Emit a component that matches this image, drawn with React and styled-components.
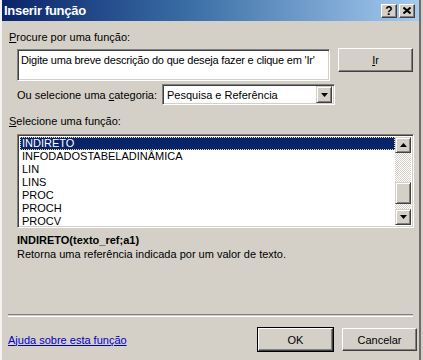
import React from 'react';
import styled, { createGlobalStyle } from 'styled-components';

const Global = createGlobalStyle`
  html, body {
    margin: 0;
    padding: 0;
    background: #d4d0c8;
  }
  body {
    font-family: "Liberation Sans", Arial, sans-serif;
    font-size: 11px;
    color: #000;
  }
`;

// Outer window frame
const Window = styled.div`
  width: 423px;
  height: 360px;
  box-sizing: border-box;
  display: flex;
  flex-direction: column;
  background: #d4d0c8;
  border-left: 2px solid #f4f3ef;
  border-right: 2px solid #d4d0c8;
  box-shadow: inset -2px 0 0 #6f6d69;
`;

const TitleBar = styled.div`
  height: 21px;
  flex: none;
  display: flex;
  align-items: center;
  padding: 0 4px 0 2px;
  margin-right: 2px;
  background: linear-gradient(90deg, #0a246a 0%, #3a6ea5 45%, #a6caf0 100%);
`;

const Title = styled.div`
  flex: 1;
  color: #fff;
  font-weight: bold;
  font-size: 13px;
  letter-spacing: -0.3px;
`;

const CaptionButtons = styled.div`
  display: flex;
  gap: 2px;
`;

const CaptionButton = styled.div`
  width: 16px;
  height: 14px;
  box-sizing: border-box;
  background: #d4d0c8;
  border: 1px solid;
  border-color: #fff #404040 #404040 #fff;
  box-shadow: inset -1px -1px 0 #808080;
  display: flex;
  align-items: center;
  justify-content: center;
  font-weight: bold;
  font-size: 12px;
  line-height: 1;
`;

const Body = styled.div`
  flex: 1;
  display: flex;
  flex-direction: column;
  padding: 0 4px 9px 6px;
`;

const Label = styled.div`
  line-height: 13px;
  padding-left: ${(p) => p.$indent || 1}px;
  margin-top: ${(p) => p.$top || 0}px;
  white-space: nowrap;
`;

const Key = styled.span`
  text-decoration: underline;
`;

const SearchRow = styled.div`
  display: flex;
  align-items: flex-start;
  margin-top: 4px;
  padding-left: 9px;
  gap: 8px;
`;

const sunken = `
  box-sizing: border-box;
  background: #fff;
  border: 1px solid;
  border-color: #808080 #fff #fff #808080;
  box-shadow: inset 1px 1px 0 #404040, inset -1px -1px 0 #d4d0c8;
`;

const SearchBox = styled.div`
  ${sunken}
  width: 313px;
  height: 32px;
  margin-top: 1px;
  padding: 4px 3px;
  line-height: 13px;
  letter-spacing: -0.2px;
  white-space: nowrap;
  overflow: hidden;
`;

const Button = styled.div`
  width: 75px;
  height: ${(p) => p.$h || 23}px;
  box-sizing: border-box;
  display: flex;
  align-items: center;
  justify-content: center;
  background: #d4d0c8;
  border: 1px solid;
  border-color: #fff #404040 #404040 #fff;
  box-shadow: inset -1px -1px 0 #808080;
  outline: ${(p) => (p.$default ? '1px solid #000' : 'none')};
`;

const CategoryRow = styled.div`
  display: flex;
  align-items: center;
  margin-top: 3px;
  padding-left: 9px;
  gap: 5px;
`;

const Select = styled.div`
  ${sunken}
  width: 173px;
  height: 21px;
  display: flex;
  align-items: center;
  padding: 2px 2px 2px 4px;
`;

const SelectText = styled.div`
  flex: 1;
`;

const ArrowButton = styled.div`
  width: 16px;
  height: 17px;
  box-sizing: border-box;
  background: #d4d0c8;
  border: 1px solid;
  border-color: #d4d0c8 #404040 #404040 #d4d0c8;
  box-shadow: inset 1px 1px 0 #fff, inset -1px -1px 0 #808080;
  display: flex;
  align-items: center;
  justify-content: center;
`;

const ListBox = styled.div`
  ${sunken}
  width: 397px;
  height: 94px;
  margin-top: 6px;
  margin-left: 9px;
  padding: 2px;
  display: flex;
`;

const Items = styled.div`
  flex: 1;
`;

const Item = styled.div`
  height: 13px;
  line-height: 13px;
  padding-left: 2px;
  box-sizing: border-box;
  white-space: nowrap;
  background: ${(p) => (p.$selected ? '#0a246a' : 'transparent')};
  color: ${(p) => (p.$selected ? '#fff' : '#000')};
  outline: ${(p) => (p.$selected ? '1px dotted #e8e4a0' : 'none')};
  outline-offset: -1px;

  &:last-child {
    height: 12px;
    line-height: 12px;
  }
`;

const ScrollBar = styled.div`
  width: 16px;
  display: flex;
  flex-direction: column;
`;

const ScrollButton = styled(ArrowButton)`
  height: 16px;
`;

const Track = styled.div`
  flex: 1;
  display: flex;
  flex-direction: column;
  background: repeating-conic-gradient(#fff 0 25%, #d4d0c8 0 50%) 0 0 / 2px 2px;
`;

const Thumb = styled(ArrowButton)`
  height: 22px;
  margin-top: 29px;
`;

const Signature = styled.div`
  margin-top: 6px;
  padding-left: 9px;
  font-weight: bold;
  line-height: 13px;
`;

const Description = styled.div`
  margin-top: 1px;
  padding-left: 9px;
  line-height: 13px;
`;

const Separator = styled.div`
  margin-top: auto;
  height: 1px;
  width: 405px;
  border-top: 1px solid #808080;
  border-bottom: 1px solid #fff;
`;

const Footer = styled.div`
  display: flex;
  align-items: center;
  margin-top: 11px;
  gap: 9px;
`;

const HelpLink = styled.a`
  flex: 1;
  color: #0000c8;
  text-decoration: underline;
`;

const Arrow = ({ up }) => (
  <svg width="7" height="4" viewBox="0 0 7 4">
    <path d={up ? 'M3.5 0 L7 4 L0 4 Z' : 'M0 0 L7 0 L3.5 4 Z'} fill="#000" />
  </svg>
);

const functions = ['INDIRETO', 'INFODADOSTABELADINÂMICA', 'LIN', 'LINS', 'PROC', 'PROCH', 'PROCV'];

export default function App() {
  return (
    <>
      <Global />
      <Window>
        <TitleBar>
          <Title>Inserir função</Title>
          <CaptionButtons>
            <CaptionButton>?</CaptionButton>
            <CaptionButton>
              <svg width="8" height="7" viewBox="0 0 8 7">
                <path d="M0.5 0.5 L7.5 6.5 M7.5 0.5 L0.5 6.5" stroke="#000" strokeWidth="2" />
              </svg>
            </CaptionButton>
          </CaptionButtons>
        </TitleBar>
        <Body>
          <Label $top={10}>
            <Key>P</Key>rocure por uma função:
          </Label>
          <SearchRow>
            <SearchBox>Digite uma breve descrição do que deseja fazer e clique em 'Ir'</SearchBox>
            <Button $h={24}>
              <Key>I</Key>r
            </Button>
          </SearchRow>
          <CategoryRow>
            <span>
              Ou selecione uma <Key>c</Key>ategoria:
            </span>
            <Select>
              <SelectText>Pesquisa e Referência</SelectText>
              <ArrowButton>
                <Arrow />
              </ArrowButton>
            </Select>
          </CategoryRow>
          <Label $top={10}>
            <Key>S</Key>elecione uma função:
          </Label>
          <ListBox>
            <Items>
              {functions.map((f, i) => (
                <Item key={f} $selected={i === 0}>
                  {f}
                </Item>
              ))}
            </Items>
            <ScrollBar>
              <ScrollButton>
                <Arrow up />
              </ScrollButton>
              <Track>
                <Thumb />
              </Track>
              <ScrollButton>
                <Arrow />
              </ScrollButton>
            </ScrollBar>
          </ListBox>
          <Signature>INDIRETO(texto_ref;a1)</Signature>
          <Description>Retorna uma referência indicada por um valor de texto.</Description>
          <Separator />
          <Footer>
            <HelpLink href="#">Ajuda sobre esta função</HelpLink>
            <Button $default>OK</Button>
            <Button>Cancelar</Button>
          </Footer>
        </Body>
      </Window>
    </>
  );
}
